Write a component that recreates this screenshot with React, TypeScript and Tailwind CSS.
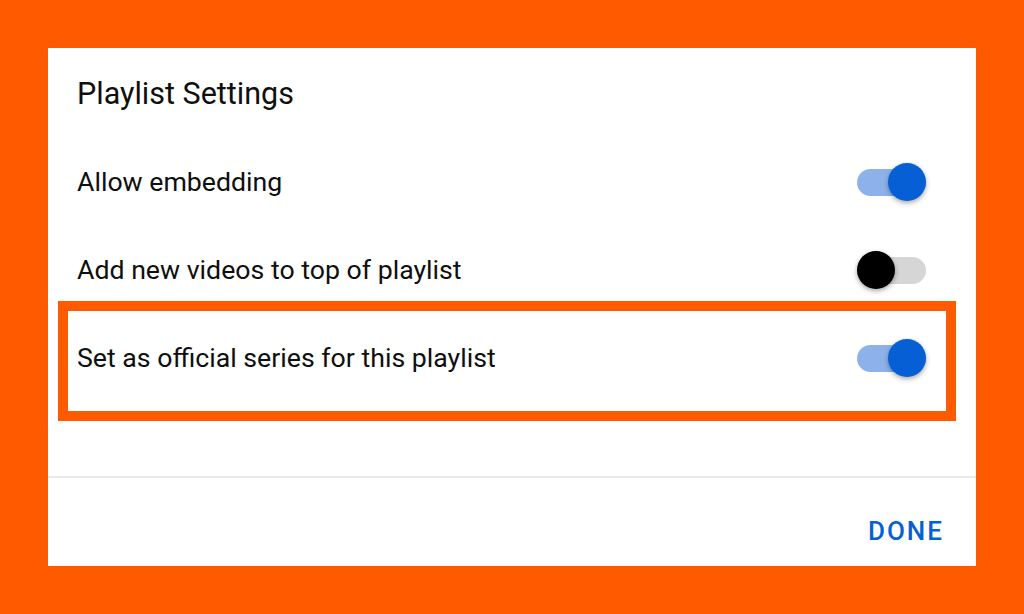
import React from "react";

function Toggle({ on }: { on: boolean }) {
  return (
    <div className="relative h-[38px] w-[69px] shrink-0 flex items-center">
      <div
        className={
          "h-[27px] w-[69px] rounded-full " + (on ? "bg-[#8db2ea]" : "bg-[#d6d6d6]")
        }
      />
      <div
        className={
          "absolute top-0 h-[38px] w-[38px] rounded-full shadow-[0_2px_5px_rgba(0,0,0,0.35)] " +
          (on ? "right-0 bg-[#065fd4]" : "left-0 bg-[#000000]")
        }
      />
    </div>
  );
}

export default function App() {
  const font = { fontFamily: "Roboto, 'Liberation Sans', sans-serif" };
  return (
    <div className="w-[1024px] h-[614px] bg-[#ff5a00] p-[48px]" style={font}>
      <div className="w-[928px] h-[518px] bg-white flex flex-col">
        <div className="h-[92px] flex items-center pl-[29px] text-[30.5px] leading-[36px] text-[#0f0f0f]">
          Playlist Settings
        </div>
        <div className="-mt-[2px] h-[88px] flex items-center justify-between pl-[29px] pr-[50px] text-[26.7px] leading-[32px] text-[#0f0f0f]">
          <span>Allow embedding</span>
          <Toggle on />
        </div>
        <div className="h-[88px] flex items-center justify-between pl-[29px] pr-[50px] text-[26.7px] leading-[32px] text-[#0f0f0f]">
          <span>Add new videos to top of playlist</span>
          <Toggle on={false} />
        </div>
        <div className="-mt-[13px] ml-[10px] mr-[20px] h-[120px] border-[10px] border-[#ff5a00] flex items-center justify-between pl-[9px] pr-[20px] pb-[6px] text-[26.7px] leading-[32px] text-[#0f0f0f]">
          <span>Set as official series for this playlist</span>
          <Toggle on />
        </div>
        <div className="mt-[55px] h-[2px] bg-[#e8e8e8]" />
        <div className="flex-1 flex items-center justify-end pr-[32px] pt-[18px]">
          <span className="text-[26px] font-medium tracking-[2px] text-[#065fd4]">DONE</span>
        </div>
      </div>
    </div>
  );
}
